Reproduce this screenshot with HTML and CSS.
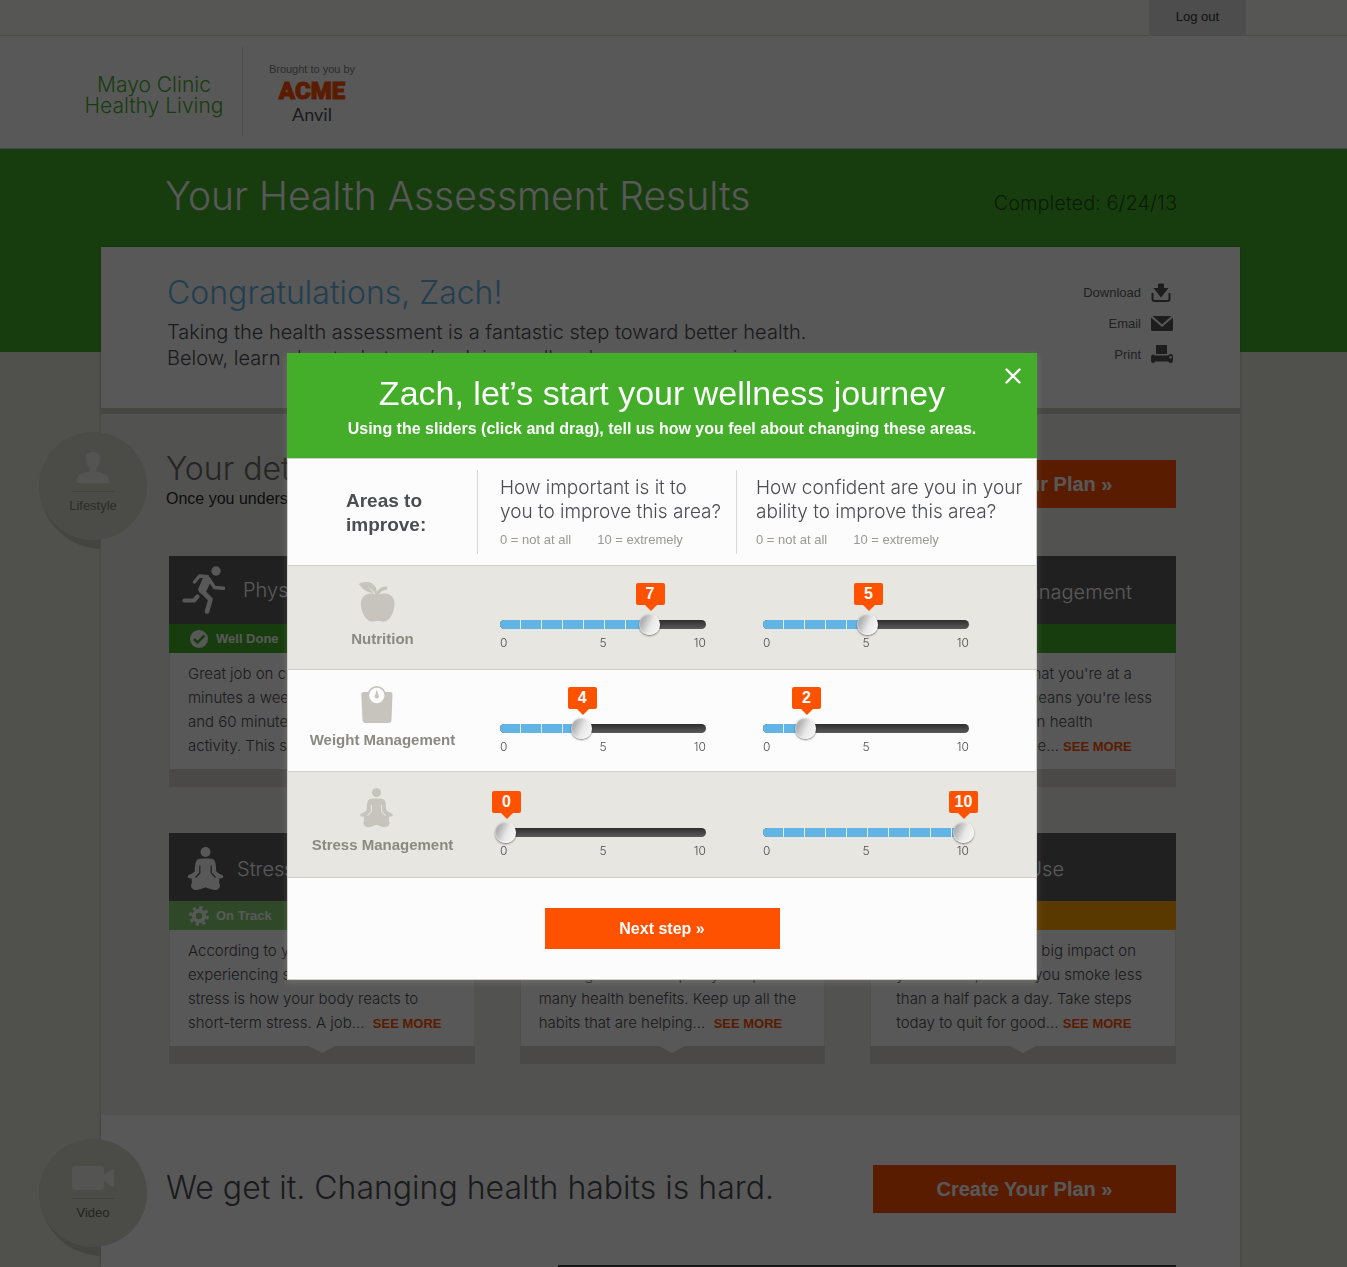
FILE: index.html
```
<!DOCTYPE html>
<html lang="en">
<head>
<meta charset="utf-8">
<title>Your Health Assessment Results</title>
<link rel="stylesheet" href="styles.css">
</head>
<body>
<svg class="sprite" aria-hidden="true">
  <symbol id="meditate" viewBox="0 0 36 44">
    <circle cx="18" cy="5" r="5"/>
    <path d="M18 11.500c4.500 0 7.500.3 8.800 1.700 1.600 2 1.700 7 2 11.300 2 2 4.200 2.800 6.200 3.800 1 .5 1.300 1.600.5 2.400-.8.6-2.600 1-4.400.8l1.200 1.500c-1 1-1 2-.4 3.500 1.500 2.500-.3 5.800-3 6.500-3.500.6-7-1.300-10.900-2.700-3.900 1.400-7.400 3.300-10.900 2.700-2.700-.7-4.500-4-3-6.500.6-1.500.6-2.500-.4-3.500l1.200-1.500c-1.800.2-3.600-.2-4.400-.8-.8-.8-.5-1.900.5-2.400 2-1 4.200-1.800 6.200-3.800.3-4.300.4-9.300 2-11.300 1.300-1.400 4.300-1.700 8.800-1.700z"/>
    <path class="cut" d="M12.300 18.500V26L8 30.500M23.700 18.500V26l4.300 4.500" fill="none" stroke-width="1.200"/>
  </symbol>
</svg>

<div class="topbar"><a class="topbar__link" href="#">Log out</a></div>

<header class="brand">
  <a class="brand__name" href="#">Mayo Clinic<br>Healthy Living</a>
  <div class="sponsor">
    <span class="sponsor__lead">Brought to you by</span>
    <span class="sponsor__main">ACME</span>
    <span class="sponsor__sub">Anvil</span>
  </div>
</header>

<div class="hero">
  <h1 class="hero__title">Your Health Assessment Results</h1>
  <p class="hero__date">Completed: 6/24/13</p>
</div>

<main class="sheet">
  <section class="summary">
    <div class="summary__text">
      <h2 class="summary__title">Congratulations, Zach!</h2>
      <p class="summary__copy">Taking the health assessment is a fantastic step toward better health.<br>Below, learn about what you’re doing well and ways you can improve.</p>
    </div>
    <ul class="tools">
      <li><a href="#">Download
        <svg width="22" height="20" viewBox="0 0 22 20"><path d="M7 1.500Q7 .5 8 .5h4q1 0 1 1V5h4.500L10 14.500 2.500 5H7z"/><path d="M1.500 10v6q0 2 2 2h13q2 0 2-2v-6" fill="none" stroke="currentColor" stroke-width="2"/></svg></a></li>
      <li><a href="#">Email
        <svg width="22" height="20" viewBox="0 0 22 20"><path d="M1.500 2h19L11 10.500zM0 3.500 11 13 22 3.500V15.500q0 1.500-1.500 1.500h-19Q0 17 0 15.500z"/></svg></a></li>
      <li><a href="#">Print
        <svg width="22" height="20" viewBox="0 0 22 20"><path d="M5 .5Q5 0 5.500 0h10q.5 0 .5.5V9H5z"/><path fill-rule="evenodd" d="M0 12q0-2.500 2-2.500 1.200 0 1.800 1h13.500q.7-1.500 2.400-1.500 2.300 0 2.300 3v3q0 3-2.300 3-1.700 0-2.400-1.500H4Q3.500 18 2 18q-2 0-2-2.500zM19.500 11a1.300 1.300 0 1 0 .1 0z"/></svg></a></li>
    </ul>
  </section>

  <section class="block block--shade">
    <div class="badge badge--lifestyle">
      <svg class="badge__disc" width="108" height="118" viewBox="0 0 108 118"><path class="badge__fold" d="M0 54C2 92 30 116 62 117V54z"/><circle cx="54" cy="54" r="54"/></svg>
      <svg class="badge__icon" width="32" height="32" viewBox="0 0 32 32"><path d="M16 0c5 0 7.500 2 7 7 0 5-2 7-3.500 9.500v3C25 21 32 22 32 28v3H0v-3c0-6 7-7 12.500-8.500v-3C11 14 9 12 9 7c-.5-5 2-7 7-7z"/></svg>
      <span class="badge__label">Lifestyle</span>
    </div>
    <div class="block__head">
      <div>
        <h2 class="block__title">Your detailed results</h2>
        <p class="block__note">Once you understand your results, create your plan.</p>
      </div>
      <button class="plan" type="button">Create Your Plan »</button>
    </div>

    <div class="cards">
      <article class="card">
        <h3 class="card__head card__head--wide">
          <svg width="44" height="48" viewBox="0 0 44 48"><circle cx="34" cy="5" r="4.700"/><g fill="none" stroke="currentColor" stroke-linecap="round" stroke-linejoin="round"><path d="m12.500 16 5-6 8 .8" stroke-width="3.400"/><path d="m27 13 5.500 8.500 9 .8" stroke-width="3.400"/><path d="m24.500 14.500-4 9" stroke-width="8.500"/><path d="m20.500 25.500 8 8-3.500 12" stroke-width="4.600"/><path d="M15.500 30.500 12 34.500H2.500" stroke-width="4.200"/></g></svg>
          Physical Activity</h3>
        <p class="card__status card__status--good">
          <svg width="20" height="20" viewBox="0 0 20 20"><circle cx="10" cy="10" r="9"/><path class="cut" d="m5 10 3.500 3.500 7-7" fill="none" stroke-width="2.500"/></svg>
          Well Done</p>
        <p class="card__copy">Great job on completing 150<br>minutes a week of moderate<br>and 60 minutes of vigorous<br>activity. This should... <a href="#">SEE MORE</a></p>
      </article>
      <article class="card">
        <h3 class="card__head">Nutrition</h3>
        <p class="card__status card__status--warn">Needs Work</p>
        <p class="card__copy">Eating more fruits, vegetables<br>and whole grains can lower<br>your risk of many common<br>conditions... <a href="#">SEE MORE</a></p>
      </article>
      <article class="card">
        <h3 class="card__head card__head--end">Weight Management</h3>
        <p class="card__status card__status--good">Well Done</p>
        <p class="card__copy card__copy--inset">Your results tell us that you're at a<br>good weight. This means you're less<br>likely to suffer certain health<br>troubles at some time... <a href="#">SEE MORE</a></p>
      </article>
      <article class="card">
        <h3 class="card__head">
          <svg width="37" height="44" viewBox="0 0 36 44"><use href="#meditate"/></svg>
          Stress Management</h3>
        <p class="card__status card__status--track">
          <svg width="20" height="20" viewBox="0 0 20 20"><circle cx="10" cy="10" r="5.200" fill="none" stroke="currentColor" stroke-width="4"/><circle cx="10" cy="10" r="8.500" fill="none" stroke="currentColor" stroke-width="3" stroke-dasharray="3.300 3.376"/></svg>
          On Track</p>
        <p class="card__copy card__copy--notch">According to your results, you’re<br>experiencing some stress. Most<br>stress is how your body reacts to<br>short-term stress. A job...&nbsp; <a href="#">SEE MORE</a></p>
      </article>
      <article class="card">
        <h3 class="card__head">Sleep</h3>
        <p class="card__status card__status--good">Well Done</p>
        <p class="card__copy card__copy--notch">You sleep well on most nights.<br>That’s great! Good-quality sleep offers<br>many health benefits. Keep up all the<br>habits that are helping...&nbsp; <a href="#">SEE MORE</a></p>
      </article>
      <article class="card">
        <h3 class="card__head card__head--use">Tobacco Use</h3>
        <p class="card__status card__status--warn">Needs Work</p>
        <p class="card__copy card__copy--notch card__copy--inset">Smoking can have a big impact on<br>your health, even if you smoke less<br>than a half pack a day. Take steps<br>today to quit for good... <a href="#">SEE MORE</a></p>
      </article>
    </div>
  </section>

  <section class="block block--video">
    <div class="badge badge--video">
      <svg class="badge__disc" width="108" height="118" viewBox="0 0 108 118"><path class="badge__fold" d="M0 54C2 92 30 116 62 117V54z"/><circle cx="54" cy="54" r="54"/></svg>
      <svg class="badge__icon" width="42" height="32" viewBox="0 0 42 32"><rect y="7" width="32" height="24" rx="3"/><path d="m32 16 8-5.500q2-1 2 1v15q0 2-2 1L32 22z"/></svg>
      <span class="badge__label">Video</span>
    </div>
    <div class="block__head">
      <h2 class="block__title">We get it. Changing health habits is hard.</h2>
      <button class="plan" type="button">Create Your Plan »</button>
    </div>
    <div class="player"></div>
  </section>
</main>

<div class="overlay">
  <div class="modal" role="dialog" aria-modal="true" aria-labelledby="journey">
    <header class="modal__head">
      <h2 class="modal__title" id="journey">Zach, let’s start your wellness journey</h2>
      <p class="modal__lead">Using the sliders (click and drag), tell us how you feel about changing these areas.</p>
      <button class="modal__close" type="button" aria-label="Close"><svg width="16" height="16" viewBox="0 0 16 16"><path d="m1.500 1.500 13 13m0-13-13 13" fill="none" stroke="currentColor" stroke-width="2.400" stroke-linecap="round"/></svg></button>
    </header>
    <table class="areas">
      <thead>
        <tr>
          <th scope="col" class="areas__first">Areas to<br>improve:</th>
          <th scope="col"><div class="ask">How important is it to<br>you to improve this area?<p class="ask__key"><span>0 = not at all</span><span>10 = extremely</span></p></div></th>
          <th scope="col"><div class="ask">How confident are you in your<br>ability to improve this area?<p class="ask__key"><span>0 = not at all</span><span>10 = extremely</span></p></div></th>
        </tr>
      </thead>
      <tbody>
        <tr>
          <th scope="row"><svg width="36" height="40" viewBox="0 0 36 40"><path d="M0 2c5-3 14-3 17 4 .6 2 .8 3 .8 4.500C19 7.500 22 4.500 27 4.500c2 1 1.500 3-.5 3.500-3 .5-5 2-6.500 4.500 3-1.500 6-1 8-.7 5 1 8 5.200 7.500 11.200C35 31 31 37.500 27 39.200c-3 1.200-5-.5-8-.5s-5 1.700-8 .5C6.500 37.500 2.500 31 2 23c-.5-6 2.500-10.200 7.500-11.200 2-.4 5-.6 7 .7-.3-2-3-5-7.500-7.500 3 3 5 5 6 5.500C9 11.500 4 8 0 2z"/></svg>Nutrition</th>
          <td><div class="slider" style="--value:7.4"><output class="slider__value">7</output><div class="slider__bar"><div class="slider__track"><i></i></div><input type="range" min="0" max="10" step="0.1" value="7.4" aria-label="Nutrition, importance"></div><div class="slider__scale"><span>0</span><span>5</span><span>10</span></div></div></td>
          <td><div class="slider" style="--value:5.1"><output class="slider__value">5</output><div class="slider__bar"><div class="slider__track"><i></i></div><input type="range" min="0" max="10" step="0.1" value="5.1" aria-label="Nutrition, confidence"></div><div class="slider__scale"><span>0</span><span>5</span><span>10</span></div></div></td>
        </tr>
        <tr class="areas__mid">
          <th scope="row"><svg width="32" height="37" viewBox="0 0 32 37"><path d="M3 6h26q2.500 0 2.500 2.500L30.500 34q0 3-3 3h-23q-3 0-3-3L.3 8.500Q.3 6 3 6z"/><circle cx="15.800" cy="9.300" r="9.300"/><circle class="dial" cx="15.800" cy="9.500" r="7.700"/><path d="m15.800 3.500 1.400 5q1.200 1.500.6 2.800-.7 1.200-2 1.200t-2-1.200q-.6-1.300.6-2.800z"/></svg>Weight Management</th>
          <td><div class="slider" style="--value:3.9"><output class="slider__value">4</output><div class="slider__bar"><div class="slider__track"><i></i></div><input type="range" min="0" max="10" step="0.1" value="3.9" aria-label="Weight management, importance"></div><div class="slider__scale"><span>0</span><span>5</span><span>10</span></div></div></td>
          <td><div class="slider" style="--value:1.9"><output class="slider__value">2</output><div class="slider__bar"><div class="slider__track"><i></i></div><input type="range" min="0" max="10" step="0.1" value="1.9" aria-label="Weight management, confidence"></div><div class="slider__scale"><span>0</span><span>5</span><span>10</span></div></div></td>
        </tr>
        <tr class="areas__last">
          <th scope="row"><svg width="33" height="40" viewBox="0 0 36 44"><use href="#meditate"/></svg>Stress Management</th>
          <td><div class="slider" style="--value:0"><output class="slider__value">0</output><div class="slider__bar"><div class="slider__track"><i></i></div><input type="range" min="0" max="10" step="0.1" value="0" aria-label="Stress management, importance"></div><div class="slider__scale"><span>0</span><span>5</span><span>10</span></div></div></td>
          <td><div class="slider" style="--value:10"><output class="slider__value">10</output><div class="slider__bar"><div class="slider__track"><i></i></div><input type="range" min="0" max="10" step="0.1" value="10" aria-label="Stress management, confidence"></div><div class="slider__scale"><span>0</span><span>5</span><span>10</span></div></div></td>
        </tr>
      </tbody>
    </table>
    <footer class="modal__foot"><button class="next" type="button">Next step »</button></footer>
  </div>
</div>
<script src="app.js"></script>
</body>
</html>
```
FILE: app.js
```
document.querySelectorAll('.slider').forEach(function (slider) {
  slider.querySelector('input').addEventListener('input', function (event) {
    slider.style.setProperty('--value', event.target.value);
    slider.querySelector('output').textContent = Math.round(event.target.value);
  });
});
```
FILE: styles.css
```
:root {
  --light: Inter, "Liberation Sans", sans-serif;
  --text: "Liberation Sans", Arial, sans-serif;
  --green: #44ae2a;
  --orange: #ff5200;
  --blue: #62b4e5;
  --ink: #4c4d50;
}
* { box-sizing: border-box; }
body {
  margin: 0;
  background: #e5e4dc;
  color: var(--ink);
  font: 16px/24px var(--text);
}
h1, h2, h3, p, ul { margin: 0; padding: 0; font-weight: 300; }
a { color: inherit; text-decoration: none; }
button { border: 0; padding: 0; cursor: pointer; color: #fcfcfc; font-family: var(--text); }
svg { fill: currentColor; }
.sprite { display: none; }
.cut { stroke: var(--cut); }

.topbar {
  display: flex;
  justify-content: flex-end;
  height: 36px;
  padding-right: 101px;
  border-bottom: 1px solid #d4d4cf;
  background: #f5f5f4;
}
.topbar__link {
  width: 97px;
  background: #dcdcdc;
  color: #333;
  font-size: 13px;
  line-height: 34px;
  text-align: center;
}

.brand {
  display: flex;
  height: 113px;
  padding: 11px 0 12px 84px;
  border-bottom: 1px solid #c8c8c8;
  background: #fcfcfc;
}
.brand__name {
  display: grid;
  align-content: center;
  width: 159px;
  padding: 6px 18px 0 0;
  border-right: 1px solid #d8d8d8;
  color: var(--green);
  font: 300 21px/21px var(--light);
  text-align: center;
}
.sponsor {
  display: flex;
  flex-direction: column;
  align-items: center;
  width: 138px;
  padding-top: 15px;
  text-align: center;
}
.sponsor__lead { color: #808080; font-size: 11px; line-height: 14px; }
.sponsor__main { color: var(--orange); font: 900 24px/30px Roboto, sans-serif; -webkit-text-stroke: 1px var(--orange); }
.sponsor__sub { font: 18px/16px Lato, sans-serif; }

.hero {
  display: flex;
  justify-content: space-between;
  align-items: baseline;
  height: 203px;
  padding: 20px 170px 0 165px;
  background: var(--green);
}
.hero__title { color: #fcfcfc; font: 300 39px/54px var(--light); }
.hero__date { color: #1f5213; font: 300 20px/24px var(--light); }

.sheet {
  margin: -105px 107px 0 101px;
  background: #fcfcfc;
  box-shadow: 0 0 3px rgba(0, 0, 0, .25);
}
.summary {
  display: flex;
  justify-content: space-between;
  height: 167px;
  padding: 24px 67px 0 66px;
  border-bottom: 6px solid #c8c8bf;
}
.summary__title { color: var(--blue); font: 300 32px/44px var(--light); }
.summary__copy { padding-top: 4px; font: 300 20px/26px var(--light); white-space: nowrap; }
.tools {
  display: grid;
  gap: 11px;
  align-content: start;
  padding-top: 12px;
  list-style: none;
}
.tools a {
  display: flex;
  justify-content: flex-end;
  align-items: center;
  gap: 10px;
  height: 20px;
  color: #606060;
  font-size: 13px;
}
.tools svg { color: #555; }

.block { position: relative; }
.block--shade { padding: 32px 64px 51px 68px; background: #ebeae4; }
.block--video { padding: 50px 64px 0 68px; }
.block__head { display: flex; justify-content: space-between; gap: 20px; }
.block__head > :first-child { margin-left: -3px; white-space: nowrap; }
.block__title { font: 300 32px/46px var(--light); }
.block--shade .block__title { color: #6a6a6a; }
.block__note { color: #2a2a2a; font-size: 16px; line-height: 14px; }
.plan {
  width: 303px;
  height: 48px;
  background: var(--orange);
  font-size: 20px;
  font-weight: bold;
}
.block--shade .plan { margin-top: 14px; }

.badge {
  position: absolute;
  left: -62px;
  display: flex;
  flex-direction: column;
  align-items: center;
  width: 108px;
  padding-top: 20px;
  color: #808076;
}
.badge--lifestyle { top: 18px; }
.badge--video { top: 24px; color: #66665e; }
.badge__disc { position: absolute; top: 0; left: 0; fill: #d7d6ce; }
.badge__fold { fill: #c4c3ba; }
.badge__icon { position: relative; fill: #f0f0ee; }
.badge__label {
  position: relative;
  display: flex;
  justify-content: center;
  width: 42px;
  margin-top: 7px;
  border-top: 1px solid #b9b9b0;
  font-size: 13px;
  line-height: 27px;
}

.cards {
  display: grid;
  grid-template-columns: repeat(3, minmax(0, 1fr));
  gap: 46px 45px;
  padding-top: 48px;
}
.card { border-bottom: 18px solid #d3d2cd; background: #fcfcfc; white-space: nowrap; }
.card__head {
  --cut: #5c5c5c;
  display: flex;
  align-items: center;
  gap: 13px;
  height: 68px;
  padding: 4px 18px 0;
  background: #5c5c5c;
  color: #fcfcfc;
  font: 300 20px/24px var(--light);
}
.card__head--wide { gap: 17px; padding: 0 13px; }
.card__head--end { justify-content: flex-end; padding-right: 44px; }
.card__head--use { justify-content: flex-end; padding-right: 112px; }
.card__status {
  --cut: var(--green);
  display: flex;
  align-items: center;
  gap: 7px;
  height: 29px;
  padding: 0 20px;
  color: #fcfcfc;
  font-size: 13px;
  font-weight: bold;
}
.card__status--good { background: var(--green); }
.card__status--track { background: #87cf72; }
.card__status--warn { background: #ffa400; }
.card__copy {
  position: relative;
  height: 116px;
  padding: 9px 18px 11px;
  border: solid #e4e4e0;
  border-width: 0 1px;
  font: 300 15px/24px var(--light);
}
.card__copy--inset { padding-left: 25px; }
.card__copy a { color: var(--orange); font: bold 13px/16px var(--text); }
.card__copy--notch::after {
  content: "";
  position: absolute;
  top: 100%;
  left: 50%;
  border: solid transparent;
  border-width: 7px 13px 0;
  border-top-color: #fcfcfc;
  transform: translateX(-50%);
}
.player { height: 2px; margin: 52px 0 0 389px; background: #444; }

.overlay {
  position: fixed;
  inset: 0;
  display: grid;
  justify-content: center;
  align-content: start;
  padding: 353px 23px 0 0;
  background: rgba(0, 0, 0, .65);
}
.modal { position: relative; width: 750px; background: #fcfcfc; box-shadow: 0 2px 6px rgba(255, 255, 255, .15); }
.modal__head {
  height: 105px;
  padding-top: 18px;
  background: var(--green);
  color: #fcfcfc;
  text-align: center;
}
.modal__title { font: 34px/44px var(--text); }
.modal__lead { font-size: 16px; font-weight: bold; line-height: 27px; }
.modal__close { position: absolute; top: 15px; right: 16px; width: 16px; height: 16px; background: none; }
.modal__close svg { display: block; }

.areas {
  width: 100%;
  border: solid #d0d0c8;
  border-width: 1px 1px 0;
  border-spacing: 0;
  table-layout: fixed;
}
.areas th, .areas td { padding: 0; border-bottom: 1px solid #d0d0c8; vertical-align: top; text-align: left; }
.areas thead th { height: 107px; font: 300 19px/24px var(--light); }
.areas thead .areas__first { width: 189px; padding: 30px 0 0 58px; font: bold 19px/24px var(--text); }
.areas thead th:nth-child(2) { width: 259px; }
.ask {
  height: 84px;
  margin-top: 11px;
  padding: 6px 0 0 22px;
  border-left: 1px solid #d8d8d8;
  white-space: nowrap;
}
.areas thead th:last-child .ask { padding-left: 19px; }
.ask__key { display: flex; gap: 26px; padding-top: 4px; color: #999990; font: 13px/24px var(--text); }
.areas tbody th {
  padding-top: 16px;
  color: #8a8a82;
  font: bold 15px/18px var(--text);
  text-align: center;
}
.areas tbody th svg { display: block; margin: 0 auto 8px; color: #c6c4bd; transform: translateX(-6px); }
.areas tbody tr { --cut: #e7e6e0; height: 104px; background: #e7e6e0; }
.areas tbody .areas__mid { height: 102px; background: #fcfcfc; }
.areas tbody .areas__last { height: 106px; }
.areas tbody .areas__last td { padding-top: 2px; }
.dial { fill: #fcfcfc; }

.slider { width: 206px; margin: 17px 0 0 23px; }
.areas td:last-child .slider { margin-left: 27px; }
.slider__value {
  position: relative;
  display: block;
  width: 29px;
  height: 22px;
  margin-left: calc(-8px + (100% - 12px) * var(--value) / 10);
  border-radius: 2px;
  background: var(--orange);
  color: #fcfcfc;
  font: bold 16px/22px var(--text);
  text-align: center;
}
.slider__value::after {
  content: "";
  position: absolute;
  top: 100%;
  left: 9px;
  border: solid transparent;
  border-width: 6px 6px 0;
  border-top-color: var(--orange);
}
.slider__bar { display: grid; align-items: center; height: 22px; margin-top: 8px; }
.slider__bar > * { grid-area: 1 / 1; }
.slider__track {
  overflow: hidden;
  height: 9px;
  border-radius: 5px;
  background: linear-gradient(#2e2e2e, #5a5a5a);
}
.slider__track i {
  display: block;
  width: calc(6px + (100% - 12px) * var(--value) / 10);
  height: 9px;
  background: repeating-linear-gradient(90deg, var(--blue) 0 20px, #e2f1fa 20px 21px);
}
.slider input {
  width: auto;
  height: 21px;
  margin: 0 -5px;
  background: none;
  -webkit-appearance: none;
  appearance: none;
}
.slider input::-webkit-slider-thumb {
  width: 21px;
  height: 21px;
  border-radius: 50%;
  background: linear-gradient(115deg, #8c8c8c, #e8e8e8 55%, #fafafa);
  box-shadow: 0 1px 2px rgba(0, 0, 0, .5), inset 0 0 2px #fff;
  -webkit-appearance: none;
}
.slider__scale {
  display: grid;
  grid-template-columns: 1fr auto 1fr;
  font: 300 12px/15px var(--light);
}
.slider__scale :last-child { text-align: right; }

.modal__foot {
  display: flex;
  justify-content: center;
  height: 102px;
  padding-top: 30px;
  border: solid #d0d0c8;
  border-width: 0 1px 1px;
}
.next {
  width: 235px;
  height: 41px;
  background: var(--orange);
  font-size: 16px;
  font-weight: bold;
}
```
